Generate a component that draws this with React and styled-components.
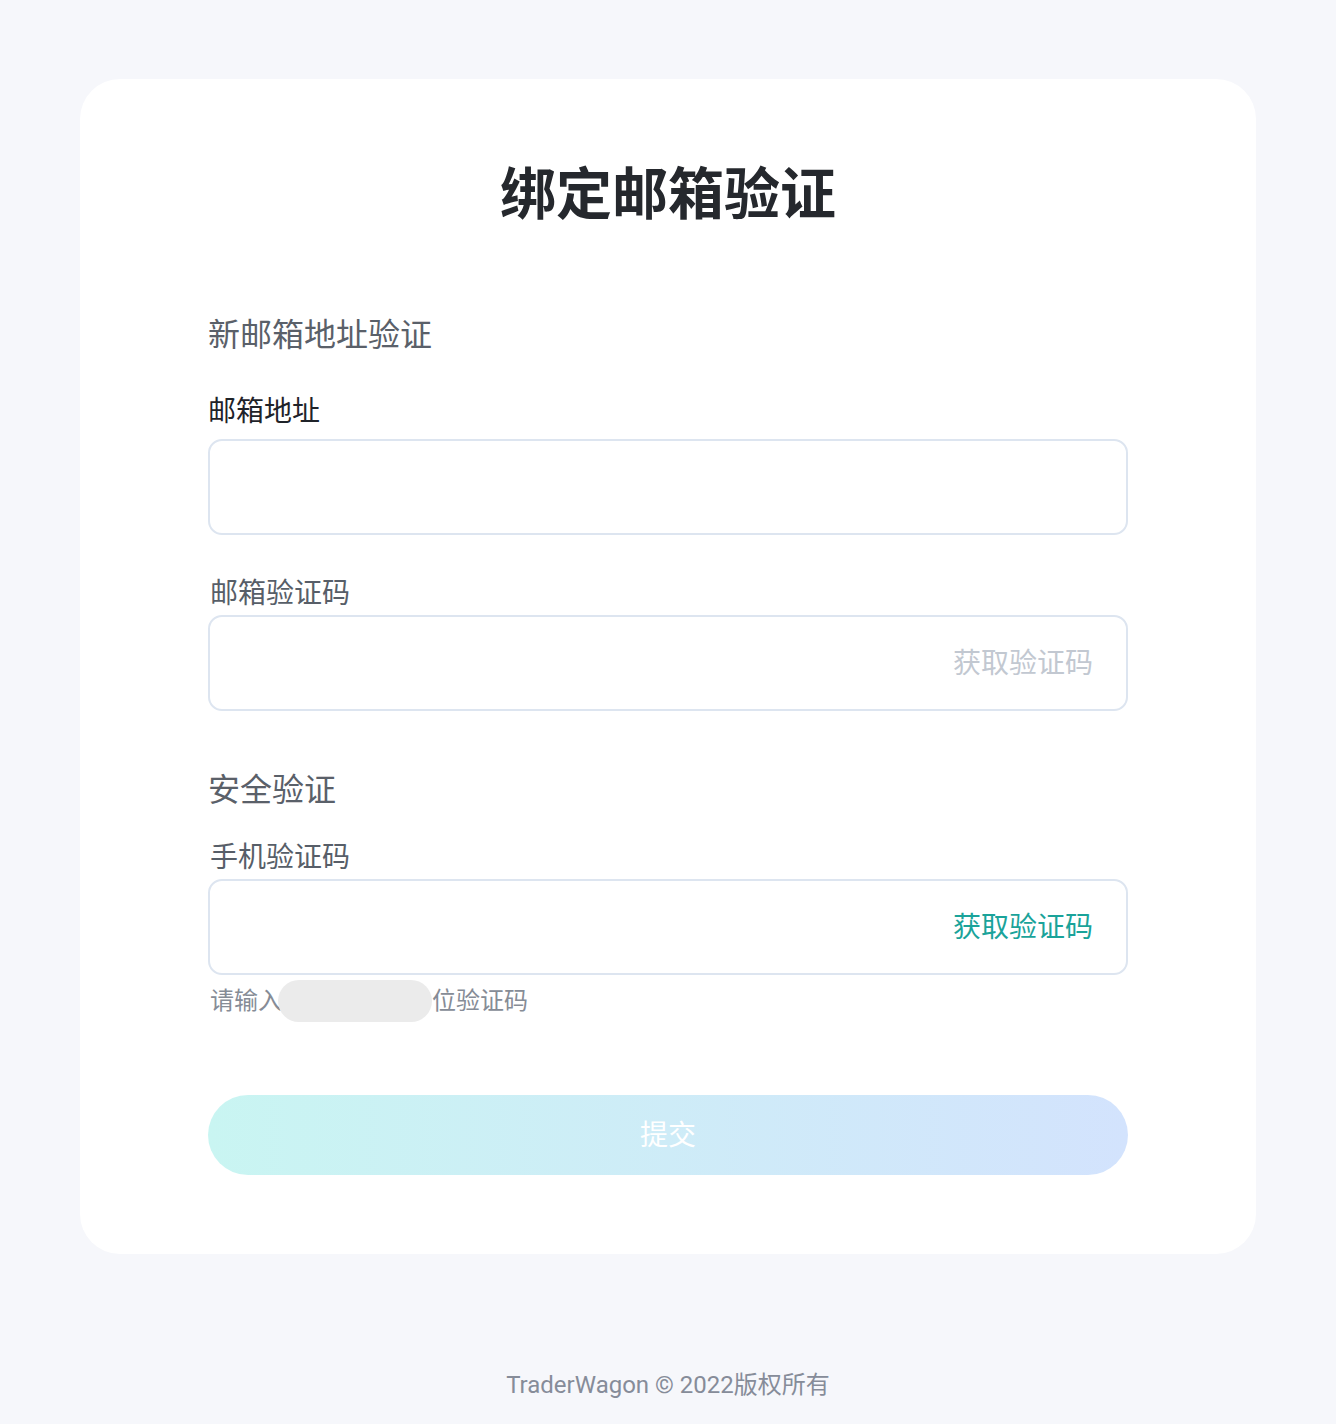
import * as React from "react"
import styled, { createGlobalStyle } from 'styled-components'

const Global = createGlobalStyle`
    body {
        margin: 0;
        background: #f6f7fb;
        font-family: Roboto, "Noto Sans CJK SC", sans-serif;
    }
`
const Page = styled.main`
    padding: 79px 80px 0;
    min-height: 1424px;
    box-sizing: border-box;
`
const Card = styled.section`
    background: #fff;
    border-radius: 40px;
    padding: 82px 128px 79px;
`
const Title = styled.h1`
    margin: 0 0 84px;
    font-size: 56px;
    line-height: 68px;
    font-weight: 700;
    text-align: center;
    color: #25282d;
`
const Section = styled.h2`
    margin: ${p => p.$top || 0}px 0 0;
    font-size: 32px;
    line-height: 44px;
    font-weight: 400;
    color: #5a6069;
`
const Label = styled.label`
    display: block;
    margin: ${p => p.$top}px 0 ${p => p.$bottom}px;
    padding-left: ${p => p.$dark ? 0 : 2}px;
    font-size: 28px;
    line-height: 40px;
    color: ${p => p.$dark ? '#1f2329' : '#575e68'};
`
const Field = styled.div`
    display: flex;
    align-items: center;
    height: 96px;
    box-sizing: border-box;
    border: 2px solid #dde5f0;
    border-radius: 14px;
    padding: 0 33px 0 24px;
`
const Input = styled.input`
    flex: 1;
    border: none;
    outline: none;
    background: transparent;
    font: inherit;
    font-size: 28px;
`
const SendCode = styled.button`
    border: none;
    background: none;
    padding: 2px 0 0;
    font: inherit;
    font-size: 28px;
    line-height: 40px;
    color: ${p => p.$active ? '#1aa39a' : '#c2c8d1'};
    cursor: ${p => p.$active ? 'pointer' : 'default'};
`
const Hint = styled.p`
    display: flex;
    align-items: center;
    margin: 5px 0 0;
    padding-left: 2px;
    font-size: 24px;
    line-height: 42px;
    color: #868c96;
`
const Masked = styled.span`
    display: inline-block;
    width: 154px;
    height: 42px;
    margin-left: -4px;
    border-radius: 21px;
    background: #ebebeb;
`
const Submit = styled.button`
    display: block;
    width: 100%;
    height: 80px;
    margin-top: 73px;
    padding: 0 0 4px;
    border: none;
    border-radius: 40px;
    background: linear-gradient(90deg, #c9f5f2 0%, #d3e3fd 100%);
    color: #fff;
    font: inherit;
    font-size: 28px;
`
const Footer = styled.footer`
    margin-top: 114px;
    text-align: center;
    font-size: 24px;
    line-height: 34px;
    color: #868c99;
`

const App = () => (
    <Page>
        <Global />
        <Card>
            <Title>绑定邮箱验证</Title>
            <Section>新邮箱地址验证</Section>
            <Label $dark $top={35} $bottom={7}>邮箱地址</Label>
            <Field><Input /></Field>
            <Label $top={39} $bottom={1}>邮箱验证码</Label>
            <Field>
                <Input />
                <SendCode>获取验证码</SendCode>
            </Field>
            <Section $top={57}>安全验证</Section>
            <Label $top={26} $bottom={1}>手机验证码</Label>
            <Field>
                <Input />
                <SendCode $active>获取验证码</SendCode>
            </Field>
            <Hint>请输入<Masked />位验证码</Hint>
            <Submit>提交</Submit>
        </Card>
        <Footer>TraderWagon © 2022版权所有</Footer>
    </Page>
)

export default App
